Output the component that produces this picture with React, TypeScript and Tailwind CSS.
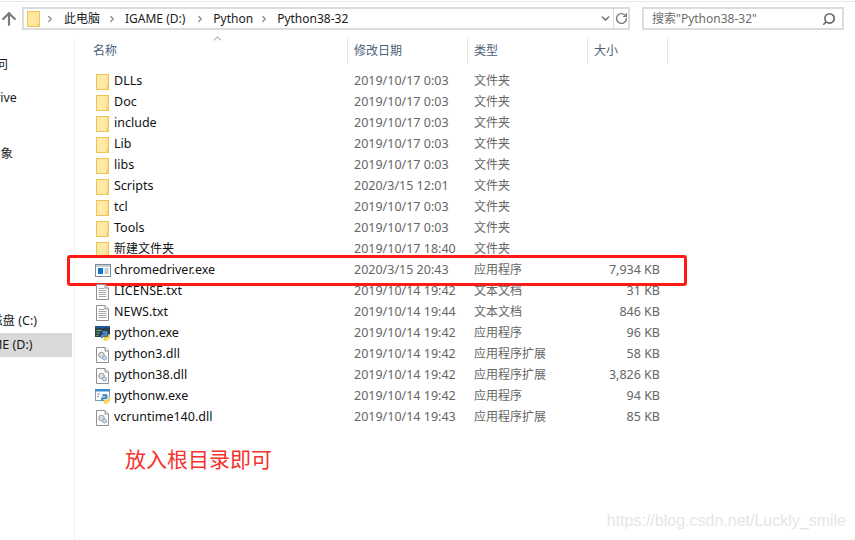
import React from 'react';
import { ArrowUp, ChevronDown, ChevronRight, RotateCw, Search, ChevronUp } from 'lucide-react';

type FileRow = { name: string; date: string; type: string; size?: string; icon: string };

const files: FileRow[] = [
  { name: 'DLLs', date: '2019/10/17 0:03', type: '文件夹', icon: 'folder' },
  { name: 'Doc', date: '2019/10/17 0:03', type: '文件夹', icon: 'folder' },
  { name: 'include', date: '2019/10/17 0:03', type: '文件夹', icon: 'folder' },
  { name: 'Lib', date: '2019/10/17 0:03', type: '文件夹', icon: 'folder' },
  { name: 'libs', date: '2019/10/17 0:03', type: '文件夹', icon: 'folder' },
  { name: 'Scripts', date: '2020/3/15 12:01', type: '文件夹', icon: 'folder' },
  { name: 'tcl', date: '2019/10/17 0:03', type: '文件夹', icon: 'folder' },
  { name: 'Tools', date: '2019/10/17 0:03', type: '文件夹', icon: 'folder' },
  { name: '新建文件夹', date: '2019/10/17 18:40', type: '文件夹', icon: 'folder' },
  { name: 'chromedriver.exe', date: '2020/3/15 20:43', type: '应用程序', size: '7,934 KB', icon: 'exe' },
  { name: 'LICENSE.txt', date: '2019/10/14 19:42', type: '文本文档', size: '31 KB', icon: 'txt' },
  { name: 'NEWS.txt', date: '2019/10/14 19:44', type: '文本文档', size: '846 KB', icon: 'txt' },
  { name: 'python.exe', date: '2019/10/14 19:42', type: '应用程序', size: '96 KB', icon: 'python' },
  { name: 'python3.dll', date: '2019/10/14 19:42', type: '应用程序扩展', size: '58 KB', icon: 'dll' },
  { name: 'python38.dll', date: '2019/10/14 19:42', type: '应用程序扩展', size: '3,826 KB', icon: 'dll' },
  { name: 'pythonw.exe', date: '2019/10/14 19:42', type: '应用程序', size: '94 KB', icon: 'pythonw' },
  { name: 'vcruntime140.dll', date: '2019/10/14 19:43', type: '应用程序扩展', size: '85 KB', icon: 'dll' },
];

const FolderIcon = () => (
  <svg width="13" height="16" viewBox="0 0 13 16">
    <rect x="0.5" y="0.5" width="12" height="15" fill="#fde08c" stroke="#eec553" />
    <path d="M1 1h9.500v14H1z" fill="#ffe9a6" />
    <path d="M10.500 11.500h2v4h-2z" fill="#f3cf68" />
  </svg>
);

const FileIcon = ({ children }: { children?: React.ReactNode }) => (
  <svg width="13" height="16" viewBox="0 0 13 16">
    <path d="M0.500 0.500h8.500l3.500 3.500v11.500h-12z" fill="#fff" stroke="#8f8f8f" />
    <path d="M9 0.500v3.500h3.500" fill="#eee" stroke="#8f8f8f" />
    {children}
  </svg>
);

// two interlocked snakes, sits in the lower right corner of the exe icons
const PythonMark = () => (
  <g transform="translate(3.400 1.750) scale(0.65)">
    <path d="M8 5h4a2 2 0 0 1 2 2v4a2 2 0 0 1-2 2H9a2 2 0 0 0-2 2v1H5.500A1.500 1.500 0 0 1 4 14.500V12a2 2 0 0 1 2-2h4V9H6V7a2 2 0 0 1 2-2z" fill="#4a8cc7" />
    <path d="M15 10h1.500a1.500 1.500 0 0 1 1.500 1.500V15a2 2 0 0 1-2 2h-4v1h4v.500a1.500 1.500 0 0 1-1.500 1.500H10a2 2 0 0 1-2-2v-2a2 2 0 0 1 2-2h3a2 2 0 0 0 2-2z" fill="#f7d04c" />
  </g>
);

const RowIcon = ({ kind }: { kind: string }) => {
  if (kind === 'folder') return <FolderIcon />;
  if (kind === 'txt') {
    return (
      <FileIcon>
        <path d="M2.500 4.500h6M2.500 6.500h8M2.500 8.500h8M2.500 10.500h8M2.500 12.500h8" stroke="#a8a8a8" />
      </FileIcon>
    );
  }
  if (kind === 'dll') {
    return (
      <FileIcon>
        <circle cx="5.500" cy="8" r="2.800" fill="#dcdcdc" stroke="#9a9a9a" />
        <circle cx="8.500" cy="11" r="2" fill="#cfe0f0" stroke="#8aa0b8" />
      </FileIcon>
    );
  }
  if (kind === 'exe') {
    return (
      <svg width="16" height="13" viewBox="0 0 16 13">
        <rect x="0.500" y="0.500" width="15" height="12" fill="#fff" stroke="#7d8a99" />
        <rect x="1" y="1" width="14" height="2" fill="#c5ced8" />
        <rect x="3" y="4" width="5" height="6" fill="#1273d0" />
        <path d="M9.500 5h4M9.500 7h4M9.500 9h4" stroke="#8a97a6" />
      </svg>
    );
  }
  if (kind === 'python') {
    return (
      <svg width="16" height="16" viewBox="0 0 16 16">
        <rect x="0" y="0" width="15" height="11" fill="#2f3e4e" />
        <rect x="0" y="0" width="15" height="2" fill="#1d5a96" />
        <path d="M1.500 4.500h5M1.500 7h3M1.500 9.500h2" stroke="#5fc45f" strokeWidth="1.200" />
        <PythonMark />
      </svg>
    );
  }
  return (
    <svg width="16" height="16" viewBox="0 0 16 16">
      <rect x="0.500" y="0.500" width="14" height="11" fill="#fff" stroke="#7d9ab8" />
      <rect x="0" y="0" width="15" height="2.500" fill="#3d8ad0" />
      <path d="M2 5h3M2 7.500h2" stroke="#8a97a6" />
      <PythonMark />
    </svg>
  );
};

const Sep = ({ className }: { className: string }) => (
  <ChevronRight size={10} strokeWidth={3} className={`${className} shrink-0 text-[#8a8a8a]`} />
);

const App: React.FC = () => {
  return (
    <div
      className="relative flex h-[540px] w-[855px] flex-col overflow-hidden bg-white text-[12.5px] text-[#1a1a1a]"
      style={{ fontFamily: '"Noto Sans", "Noto Sans CJK SC", sans-serif' }}
    >
      {/* address bar */}
      <div className="mt-[1px] flex h-[36px] items-start border-t border-[#e6e6e6] pt-[5px] text-[12px]">
        <div className="flex w-[22px] pt-[2px]">
          <ArrowUp size={20} strokeWidth={2.6} className="-ml-[1px] shrink-0 text-[#7a7a7a]" />
        </div>
        <div className="flex h-[23px] w-[591px] items-center border-2 border-r-0 border-[#dcdcdc] pl-[3px]">
          <svg width="13" height="16" viewBox="0 0 13 16">
            <rect x="0.5" y="0.5" width="12" height="15" fill="#ffe79f" stroke="#eec553" />
            <path d="M10.500 12h2v3.500h-2z" fill="#f3cf68" />
          </svg>
          <Sep className="ml-[5px]" />
          <span className="ml-[9px]">此电脑</span>
          <Sep className="ml-[7px]" />
          <span className="ml-[8px]">IGAME (D:)</span>
          <Sep className="ml-[10px]" />
          <span className="ml-[8px]">Python</span>
          <Sep className="ml-[6px]" />
          <span className="ml-[8px]">Python38-32</span>
          <ChevronDown size={13} strokeWidth={2.6} className="ml-auto mr-[1px] text-[#5f5f5f]" />
        </div>
        <div className="flex h-[23px] w-[17px] items-center justify-center border-2 border-l border-[#dcdcdc]">
          <RotateCw size={13} strokeWidth={2.4} className="shrink-0 text-[#777]" />
        </div>
        <div className="ml-[12px] flex h-[23px] w-[202px] items-center justify-between border-2 border-[#dcdcdc] pl-[8px] pr-[6px] text-[#6d6d6d]">
          <span>搜索"Python38-32"</span>
          <Search size={14} strokeWidth={2.8} className="scale-x-[-1] text-[#666]" />
        </div>
      </div>

      <div className="flex flex-1">
        {/* navigation pane, cropped at the left edge of the shot */}
        <div className="w-[75px] shrink-0 border-r border-[#f2f2f2]">
          <div className="flex h-[272px] flex-col items-start whitespace-nowrap">
            <span className="mt-[19px] -ml-[17px]">访问</span>
            <span className="mt-[14px] -ml-[14px]">Drive</span>
            <span className="mt-[37px] -ml-[12px]">对象</span>
          </div>
          <div className="flex h-[24px] w-[72px] items-center whitespace-nowrap">
            <span className="-ml-[10px]">磁盘 (C:)</span>
          </div>
          <div className="flex h-[24px] w-[72px] items-center whitespace-nowrap bg-[#d9d9d9]">
            <span className="-ml-[9px]">ME (D:)</span>
          </div>
        </div>

        {/* file list */}
        <div className="flex-1">
          <div className="relative flex h-[27px] pt-[1px] text-[12px] text-[#4c607a]">
            <ChevronUp size={13} strokeWidth={1.6} className="absolute left-[136px] -top-[5px] text-[#777]" />
            <div className="flex w-[273px] items-center border-r border-[#e5e5e5] pl-[18px]">名称</div>
            <div className="flex w-[120px] items-center border-r border-[#e5e5e5] pl-[6px]">修改日期</div>
            <div className="flex w-[120px] items-center border-r border-[#e5e5e5] pl-[6px]">类型</div>
            <div className="flex w-[80px] items-center border-r border-[#e5e5e5] pl-[6px]">大小</div>
          </div>
          <div className="mt-[7px]">
            {files.map(file => (
              <div key={file.name} className="relative flex h-[21px] items-center">
                <div className="flex w-[272px] items-center pl-[18px]">
                  <span className="mr-[2px] flex w-[19px] justify-center">
                    <RowIcon kind={file.icon} />
                  </span>
                  <span className={file.name === '新建文件夹' ? '-mt-[2px] text-[12px] text-[#111]' : 'text-[#111]'}>{file.name}</span>
                </div>
                <div className="w-[120px] pl-[7px] text-[#666]">{file.date}</div>
                <div className="-mt-[2px] w-[120px] pl-[7px] text-[12px] text-[#666]">{file.type}</div>
                <div className="w-[73px] text-right text-[#666]">{file.size}</div>
                {file.name === 'chromedriver.exe' && (
                  <div className="absolute -left-[8px] -top-[5px] h-[31px] w-[620px] rounded-[3px] border-[3px] border-[#ff1a13]" />
                )}
              </div>
            ))}
          </div>
          <p className="ml-[50px] mt-[17px] text-[21px] leading-[28px] text-[#f5322d]">放入根目录即可</p>
        </div>
      </div>

      <span
        className="absolute bottom-[7px] right-[9px] text-[16px] text-[#e6e6e6]"
        style={{ fontFamily: '"Liberation Sans", sans-serif' }}
      >
        https://blog.csdn.net/Luckly_smile
      </span>
    </div>
  );
};

export default App;
